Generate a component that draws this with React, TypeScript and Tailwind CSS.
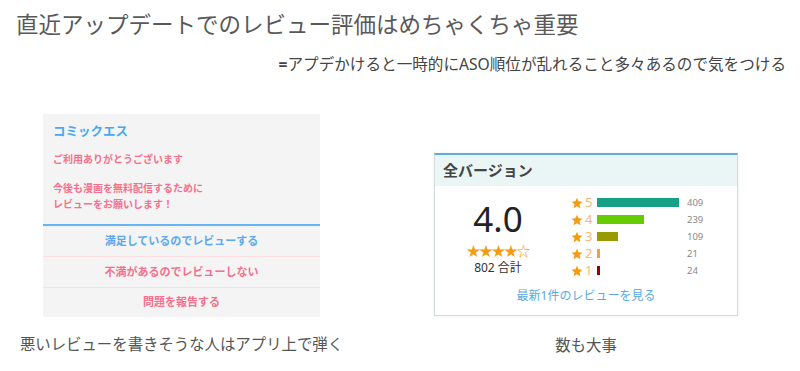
import React from 'react';

const bars = [
  { n: 5, w: 82, color: 'bg-[#16a085]', count: 409 },
  { n: 4, w: 47, color: 'bg-[#66cc00]', count: 239 },
  { n: 3, w: 21, color: 'bg-[#999900]', count: 109 },
  { n: 2, w: 3, color: 'bg-[#f5a030]', count: 21 },
  { n: 1, w: 3, color: 'bg-[#990000]', count: 24 },
];

const Star = () => (
  <svg width="12" height="12" viewBox="0 0 24 24" className="shrink-0">
    <path fill="#f39c12" d="M12 1.5l3.1 7.2 7.8.7-5.9 5.2 1.8 7.7L12 18.3l-6.8 4 1.8-7.7L1.1 9.4l7.8-.7z" />
  </svg>
);

const App: React.FC = () => {
  return (
    <div className="w-[800px] h-[371px] bg-white overflow-hidden font-['Noto_Sans','Noto_Sans_CJK_JP',sans-serif]">
      <h1 className="pl-[16px] pt-[12px] text-[22.5px] leading-[26px] text-[#595959]">
        直近アップデートでのレビュー評価はめちゃくちゃ重要
      </h1>
      <p className="mt-[17px] pr-[14px] text-right text-[15.6px] leading-[18px] text-[#444]">
        <span className="font-bold">=</span>アプデかけると一時的にASO順位が乱れること多々あるので気をつける
      </p>

      <div className="flex mt-[41px]">
        {/* 左: アプリ内のレビュー誘導 */}
        <div className="w-[363px] flex flex-col items-center">
          <div className="w-[277px] bg-[#f4f4f4] font-bold">
            <div className="px-[10px] pt-[10px]">
              <div className="text-[12.5px] leading-[16px] text-[#4aa8f0]">コミックエス</div>
              <div className="mt-[12px] text-[10px] leading-[14px] text-[#f5708c]">ご利用ありがとうございます</div>
              <div className="mt-[14px] text-[10px] leading-[16px] text-[#f5708c]">
                今後も漫画を無料配信するために
                <br />
                レビューをお願いします！
              </div>
            </div>
            <div className="mt-[12px] h-[2px] bg-[#64b5f6]" />
            <div className="h-[31px] flex items-center justify-center border-b border-[#fbdde2] text-[11px] text-[#5aa8f0]">
              満足しているのでレビューする
            </div>
            <div className="h-[31px] flex items-center justify-center border-b border-[#fbdde2] text-[11px] text-[#f5708c]">
              不満があるのでレビューしない
            </div>
            <div className="h-[29px] flex items-center justify-center text-[11px] text-[#f5708c]">
              問題を報告する
            </div>
          </div>
          <p className="mt-[19px] text-[15.4px] leading-[18px] text-[#555]">
            悪いレビューを書きそうな人はアプリ上で弾く
          </p>
        </div>

        {/* 右: ストアの評価 */}
        <div className="ml-[71px] w-[304px] mt-[39px] flex flex-col items-center">
          <div className="w-[304px] border border-[#d3dcdc] border-t-2 border-t-[#5dade2] shadow-[0_0_3px_rgba(0,0,0,0.08)]">
            <div className="h-[31px] flex items-center pl-[8px] bg-[#e9f6f5] text-[15px] font-bold text-[#444]">
              全バージョン
            </div>
            <div className="bg-white pt-[8px] pb-[11px]">
              <div className="flex">
                <div className="w-[126px] flex flex-col items-center pt-[5px]">
                  <div className="text-[35px] leading-[40px] text-[#222]">4.0</div>
                  <div className="mt-[5px] text-[13.5px] leading-[14px] text-[#f39c12] tracking-[-1px]">★★★★☆</div>
                  <div className="mt-[2px] text-[12px] leading-[16px] text-[#333]">802 合計</div>
                </div>
                <div className="pl-[10px]">
                  {bars.map((b) => (
                    <div key={b.n} className="h-[17px] flex items-center">
                      <Star />
                      <span className="ml-[2px] w-[9px] text-[13px] leading-none text-[#f5b87a]">{b.n}</span>
                      <div className="ml-[3px] w-[90px]">
                        <div className={`h-[9px] ${b.color}`} style={{ width: b.w }} />
                      </div>
                      <span className="text-[9.5px] leading-none text-[#888]">{b.count}</span>
                    </div>
                  ))}
                </div>
              </div>
              <div className="mt-[9px] text-center text-[12px] leading-[16px] text-[#5aa8e0]">
                最新1件のレビューを見る
              </div>
            </div>
          </div>
          <p className="mt-[21px] text-[15.4px] leading-[18px] text-[#555]">数も大事</p>
        </div>
      </div>
    </div>
  );
};

export default App;
